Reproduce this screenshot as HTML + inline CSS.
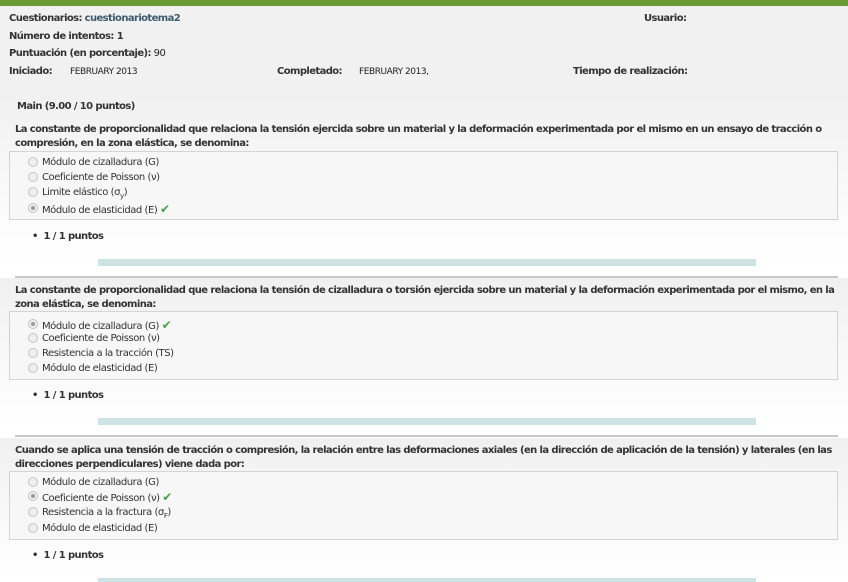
<!DOCTYPE html>
<html><head><meta charset="utf-8"><style>
*{margin:0;padding:0;box-sizing:border-box}
body{width:848px;height:582px;overflow:hidden;background:#fff;font-family:"DejaVu Sans",Verdana,sans-serif;font-size:10px;color:#222;position:relative}
.a{position:absolute;white-space:nowrap;line-height:12px;letter-spacing:-0.45px;margin-top:1px}
.opt{color:#333;margin-top:2px}
b{font-weight:bold;color:#333;letter-spacing:-0.6px}
.hdr{position:absolute;left:0;top:6px;width:848px;height:80px;background:#f1f1f1}
.q{position:absolute;left:0;width:848px;background:linear-gradient(#f0f0f0,#fbfbfb 70%,#fff)}
.box{position:absolute;left:9px;width:829px;height:69px;border:1px solid #d4d4d4;background:#f7f7f7}
.bar{position:absolute;left:98px;width:658px;height:7px;background:#cde2e2}
.hr{position:absolute;left:15px;width:823px;height:2px;background:#c8c8c8}
.r{position:absolute;left:28px;width:10px;height:10px;border:1px solid #c4c4c4;border-radius:50%;background:#eee;margin-top:1px}
.r.s::after{content:"";position:absolute;left:2px;top:2px;width:4px;height:4px;border-radius:50%;background:#999}
.ck{color:#4aa04a;font-weight:bold;font-size:12px}
</style></head><body>
<div style="position:absolute;left:0;top:0;width:848px;height:6px;background:#6a9a32"></div>
<div class="hdr"></div>
<div class="q" style="top:86px;height:180px"></div>
<div class="q" style="top:278px;height:150px"></div>
<div class="q" style="top:438px;height:140px"></div>

<div class="a" style="left:9px;top:12px"><b>Cuestionarios:</b> <span style="color:#3d5a6e;font-weight:bold;letter-spacing:-0.6px">cuestionariotema2</span></div>
<div class="a" style="left:644px;top:12px"><b>Usuario:</b></div>
<div class="a" style="left:9px;top:30px"><b>Número de intentos: 1</b></div>
<div class="a" style="left:9px;top:47px"><b>Puntuación (en porcentaje):</b> 90</div>
<div class="a" style="left:9px;top:65px"><b>Iniciado:</b></div>
<div class="a" style="left:70px;top:65px;font-size:9px">FEBRUARY 2013</div>
<div class="a" style="left:277px;top:65px"><b>Completado:</b></div>
<div class="a" style="left:359px;top:65px;font-size:9px">FEBRUARY 2013,</div>
<div class="a" style="left:573px;top:65px"><b>Tiempo de realización:</b></div>
<div class="a" style="left:17px;top:100px"><b>Main (9.00 / 10 puntos)</b></div>

<div class="a" style="left:15px;top:123px"><b>La constante de proporcionalidad que relaciona la tensión ejercida sobre un material y la deformación experimentada por el mismo en un ensayo de tracción o</b></div>
<div class="a" style="left:15px;top:137px"><b>compresión, en la zona elástica, se denomina:</b></div>
<div class="box" style="top:151px"></div>
<div class="r" style="top:156px"></div><div class="a opt" style="left:42px;top:155px">Módulo de cizalladura (G)</div>
<div class="r" style="top:171px"></div><div class="a opt" style="left:42px;top:170px">Coeficiente de Poisson (ν)</div>
<div class="r" style="top:186px"></div><div class="a opt" style="left:42px;top:185px">Limite elástico (σ<sub style="font-size:7px">y</sub>)</div>
<div class="r s" style="top:202px"></div><div class="a opt" style="left:42px;top:201px">Módulo de elasticidad (E) <span class="ck">✔</span></div>
<div class="a" style="left:32px;top:230px"><b>•&nbsp; 1 / 1 puntos</b></div>
<div class="bar" style="top:259px"></div>
<div class="hr" style="top:276px"></div>

<div class="a" style="left:15px;top:284px"><b>La constante de proporcionalidad que relaciona la tensión de cizalladura o torsión ejercida sobre un material y la deformación experimentada por el mismo, en la</b></div>
<div class="a" style="left:15px;top:298px"><b>zona elástica, se denomina:</b></div>
<div class="box" style="top:311px"></div>
<div class="r s" style="top:318px"></div><div class="a opt" style="left:42px;top:317px">Módulo de cizalladura (G) <span class="ck">✔</span></div>
<div class="r" style="top:332px"></div><div class="a opt" style="left:42px;top:331px">Coeficiente de Poisson (ν)</div>
<div class="r" style="top:347px"></div><div class="a opt" style="left:42px;top:346px">Resistencia a la tracción (TS)</div>
<div class="r" style="top:362px"></div><div class="a opt" style="left:42px;top:361px">Módulo de elasticidad (E)</div>
<div class="a" style="left:32px;top:389px"><b>•&nbsp; 1 / 1 puntos</b></div>
<div class="bar" style="top:418px"></div>
<div class="hr" style="top:435px"></div>

<div class="a" style="left:15px;top:444px"><b>Cuando se aplica una tensión de tracción o compresión, la relación entre las deformaciones axiales (en la dirección de aplicación de la tensión) y laterales (en las</b></div>
<div class="a" style="left:15px;top:458px"><b>direcciones perpendiculares) viene dada por:</b></div>
<div class="box" style="top:471px"></div>
<div class="r" style="top:476px"></div><div class="a opt" style="left:42px;top:475px">Módulo de cizalladura (G)</div>
<div class="r s" style="top:490px"></div><div class="a opt" style="left:42px;top:489px">Coeficiente de Poisson (ν) <span class="ck">✔</span></div>
<div class="r" style="top:506px"></div><div class="a opt" style="left:42px;top:505px">Resistencia a la fractura (σ<sub style="font-size:7px">F</sub>)</div>
<div class="r" style="top:522px"></div><div class="a opt" style="left:42px;top:521px">Módulo de elasticidad (E)</div>
<div class="a" style="left:32px;top:549px"><b>•&nbsp; 1 / 1 puntos</b></div>
<div class="bar" style="top:578px;height:4px"></div>
</body></html>
